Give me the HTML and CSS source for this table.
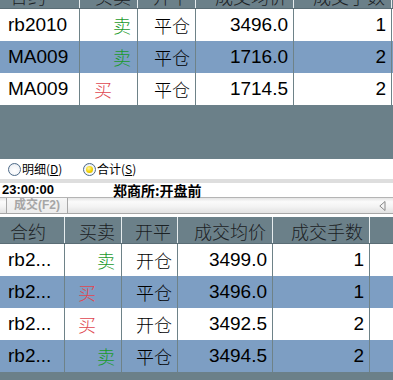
FILE: index.html
```html
<!DOCTYPE html>
<html lang="zh-CN">
<head>
<meta charset="utf-8">
<title>成交</title>
<link rel="stylesheet" href="styles.css">
</head>
<body>
<div class="panel top-panel">
  <div class="grid top">
    <div class="row head">
      <div class="c l">合约</div><div class="c">买卖</div><div class="c">开平</div><div class="c">成交均价</div><div class="c">成交手数</div><div class="c e"></div>
    </div>
    <div class="row">
      <div class="c l">rb2010</div><div class="c cj sell">卖</div><div class="c cj">平仓</div><div class="c">3496.0</div><div class="c">1</div><div class="c e"></div>
    </div>
    <div class="row alt">
      <div class="c l">MA009</div><div class="c cj sell">卖</div><div class="c cj">平仓</div><div class="c">1716.0</div><div class="c">2</div><div class="c e"></div>
    </div>
    <div class="row">
      <div class="c l">MA009</div><div class="c cj buy">买</div><div class="c cj">平仓</div><div class="c">1714.5</div><div class="c">2</div><div class="c e"></div>
    </div>
  </div>
</div>
<div class="radio-bar">
  <label class="radio"><span class="dot"></span><span class="rt">明细(<u>D</u>)</span></label>
  <label class="radio on"><span class="dot"></span><span class="rt">合计(<u>S</u>)</span></label>
</div>
<div class="strip"></div>
<div class="status">
  <span class="time">23:00:00</span>
  <span class="exch">郑商所:开盘前</span>
</div>
<div class="tabbar">
  <div class="tab">成交(F2)</div>
  <svg class="arrow" width="7" height="10" viewBox="0 0 7 10"><path d="M6 0.5 L0.8 5 L6 9.5 Z" fill="#f4f4f4" stroke="#8a8a8a" stroke-width="1"/></svg>
</div>
<div class="gap"></div>
<div class="panel bottom-panel">
  <div class="grid bottom">
    <div class="row head">
      <div class="c l">合约</div><div class="c">买卖</div><div class="c">开平</div><div class="c">成交均价</div><div class="c">成交手数</div><div class="c e"></div>
    </div>
    <div class="row">
      <div class="c l">rb2...</div><div class="c cj sell">卖</div><div class="c cj">开仓</div><div class="c">3499.0</div><div class="c">1</div><div class="c e"></div>
    </div>
    <div class="row alt">
      <div class="c l">rb2...</div><div class="c cj buy">买</div><div class="c cj">平仓</div><div class="c">3496.0</div><div class="c">1</div><div class="c e"></div>
    </div>
    <div class="row">
      <div class="c l">rb2...</div><div class="c cj buy">买</div><div class="c cj">开仓</div><div class="c">3492.5</div><div class="c">2</div><div class="c e"></div>
    </div>
    <div class="row alt">
      <div class="c l">rb2...</div><div class="c cj sell">卖</div><div class="c cj">平仓</div><div class="c">3494.5</div><div class="c">2</div><div class="c e"></div>
    </div>
  </div>
</div>
</body>
</html>
```
FILE: styles.css
```css
html, body {
  margin: 0;
  padding: 0;
  background: #ffffff;
}
body {
  width: 393px;
  height: 380px;
  overflow: hidden;
  font-family: "Liberation Sans", "Noto Sans CJK SC", sans-serif;
  color: #000;
}
.panel {
  background: #6b8089;
  overflow: hidden;
}
.top-panel {
  height: 159px;
}
.bottom-panel {
  height: 163px;
}
.grid.top {
  margin-top: -18px;
}
.row {
  display: grid;
  height: 32px;
  background: #ffffff;
}
.top .row {
  grid-template-columns: 80px 58px 58px 98px 98px 1fr;
}
.bottom .row {
  grid-template-columns: 65px 57px 56px 95px 97px 1fr;
}
.row.alt {
  background: #7d9ec3;
}
.row.head {
  height: 27px;
  background: #6b8089;
  border-bottom: 1px solid #5a6d75;
  box-sizing: border-box;
}
.c {
  box-sizing: border-box;
  border-right: 1px solid #6e8288;
  display: flex;
  align-items: center;
  justify-content: flex-end;
  padding-right: 5px;
  font-size: 19px;
  white-space: nowrap;
  overflow: hidden;
}
.c.l {
  justify-content: flex-start;
  padding-left: 8px;
  padding-right: 0;
}
.c.e {
  border-right: none;
}
.c.cj {
  font-family: "Noto Sans CJK SC", sans-serif;
  font-size: 18px;
  font-weight: 300;
}
.head .c {
  font-family: "Noto Sans CJK SC", sans-serif;
  font-size: 18px;
  font-weight: 300;
  color: #1b2124;
  border-right: 1px solid #e6ecee;
  padding-right: 6px;
  padding-top: 1px;
}
.head .c.l {
  padding-left: 10px;
}
.head .c.e {
  border-right: none;
}
.sell {
  color: #1a9a2c;
  padding-right: 6px;
}
.buy {
  color: #e0464f;
  padding-right: 25px;
}
.radio-bar {
  height: 20px;
  display: grid;
  grid-template-columns: 75px auto;
  padding-left: 8px;
  align-items: center;
  font-family: "Noto Sans CJK SC", sans-serif;
  font-size: 12px;
  color: #000;
}
.radio {
  display: flex;
  align-items: center;
  gap: 1px;
  line-height: 14px;
}
.dot {
  width: 13px;
  height: 13px;
  box-sizing: border-box;
  border-radius: 50%;
  border: 1px solid #4d6a88;
  background: radial-gradient(circle at 50% 60%, #ffffff 0%, #f2f4f7 60%, #d2dae2 100%);
  display: flex;
  align-items: center;
  justify-content: center;
}
.radio.on .dot::after {
  content: "";
  width: 7px;
  height: 7px;
  border-radius: 50%;
  background: radial-gradient(circle at 40% 35%, #fff6a0 0%, #f2d200 55%, #c9a400 100%);
}
.rt u {
  text-decoration: underline;
}
.strip {
  height: 4px;
  background: #dedede;
}
.status {
  height: 14px;
  display: grid;
  grid-template-columns: 111px auto;
  padding-left: 2px;
  align-items: center;
  line-height: 14px;
  font-weight: bold;
}
.time {
  font-family: "Liberation Sans", sans-serif;
  font-size: 13px;
}
.exch {
  font-family: "Noto Sans CJK SC", sans-serif;
  font-size: 14px;
  font-weight: bold;
}
.tabbar {
  height: 17px;
  box-sizing: border-box;
  border-top: 1px solid #b4b4b4;
  border-bottom: 1px solid #a6a6a6;
  background: linear-gradient(#e4e4e4 0%, #fbfbfb 25%, #f4f4f4 55%, #e2e2e2 100%);
  display: flex;
  justify-content: space-between;
  align-items: stretch;
  padding-left: 6px;
  padding-right: 7px;
}
.tab {
  width: 62px;
  box-sizing: border-box;
  border-left: 1px solid #a8a8a8;
  border-right: 1px solid #a8a8a8;
  background: linear-gradient(#f6f6f6, #ececec);
  color: #a6a6a6;
  font-family: "Liberation Sans", "Noto Sans CJK SC", sans-serif;
  font-weight: bold;
  font-size: 12px;
  line-height: 15px;
  text-align: center;
}
.arrow {
  align-self: center;
}
.gap {
  height: 3px;
  background: #ffffff;
}
```
